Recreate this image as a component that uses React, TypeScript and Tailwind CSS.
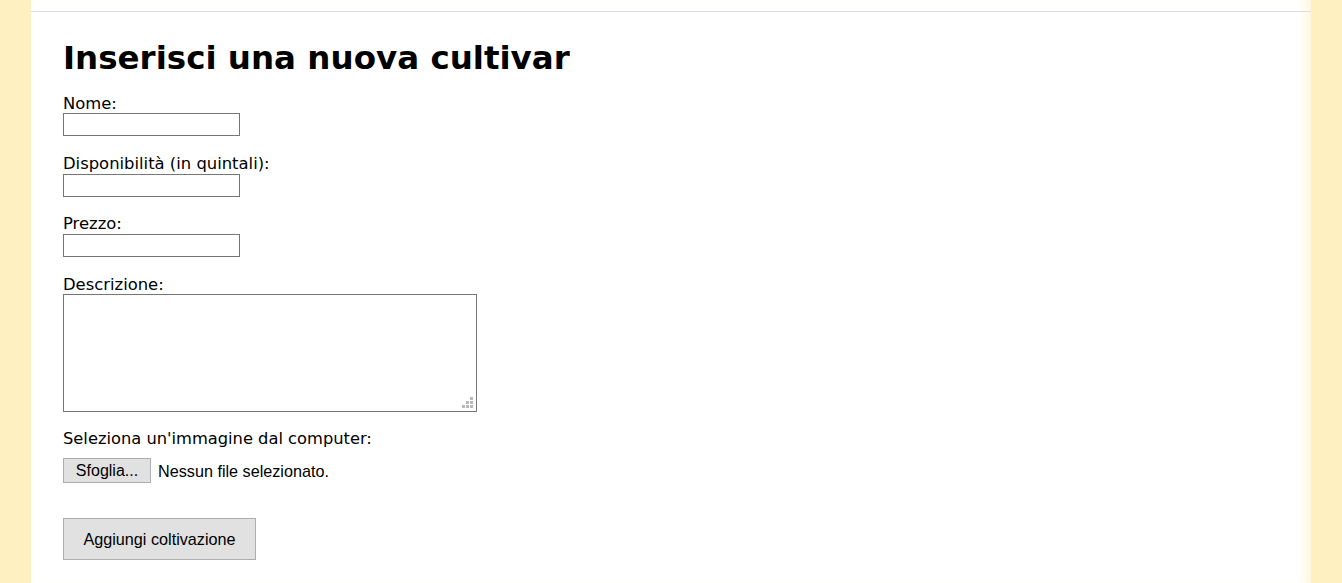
import { useState } from 'react'

const labelFont = { fontFamily: '"DejaVu Sans", Verdana, sans-serif' }

function Field({ label }: { label: string }) {
  return (
    <div className="mb-[18.7px]">
      <label className="block text-[16.4px] leading-[18.6px] text-black">{label}</label>
      <input
        type="text"
        className="block h-[23px] w-[177px] border border-[#767676] bg-white px-1 text-[13px] outline-none"
      />
    </div>
  )
}

export default function App() {
  const [desc, setDesc] = useState('')

  return (
    <div className="min-h-[583px] w-full bg-[#fef0c0]" style={labelFont}>
      <div className="mx-[31px] min-h-[583px] bg-white shadow-[inset_-14px_0_14px_-10px_rgba(254,240,192,0.7)]">
        {/* top rule */}
        <div className="h-[12px] border-b border-[#dddddd]" />

        <div className="pl-[32px] pt-[28px] pb-6">
          <h1 className="mb-[17.5px] text-[32.5px] font-bold leading-[37.25px] text-black">
            Inserisci una nuova cultivar
          </h1>

          <Field label="Nome:" />
          <Field label="Disponibilità (in quintali):" />
          <Field label="Prezzo:" />

          <div className="mb-[18px]">
            <label className="block text-[16.4px] leading-[18.6px] text-black">Descrizione:</label>
            <div className="relative h-[118px] w-[414px]">
              <textarea
                value={desc}
                onChange={(e) => setDesc(e.target.value)}
                className="block h-full w-full resize-none border border-[#767676] bg-white p-1 text-[13px] outline-none"
              />
              {/* resize grip */}
              <svg className="absolute bottom-[3px] right-[3px]" width="12" height="12" viewBox="0 0 12 12">
                <g fill="#b9b9b9">
                  <rect x="8" y="0" width="3" height="3" />
                  <rect x="4" y="4" width="3" height="3" />
                  <rect x="8" y="4" width="3" height="3" />
                  <rect x="0" y="8" width="3" height="3" />
                  <rect x="4" y="8" width="3" height="3" />
                  <rect x="8" y="8" width="3" height="3" />
                </g>
              </svg>
            </div>
          </div>

          <label className="block text-[16.3px] leading-[18.6px] text-black">
            Seleziona un'immagine dal computer:
          </label>
          <div
            className="mt-[9.5px] flex items-center gap-[7px]"
            style={{ fontFamily: '"Liberation Sans", Arial, sans-serif' }}
          >
            <button className="h-[25px] w-[88px] border border-[#adadad] bg-[#e1e1e1] text-[16px] text-black">
              Sfoglia...
            </button>
            <span className="text-[16.2px] text-black">Nessun file selezionato.</span>
          </div>

          <button
            className="mt-[35px] h-[42px] w-[193px] border border-[#adadad] bg-[#e1e1e1] text-[16.2px] text-black"
            style={{ fontFamily: '"Liberation Sans", Arial, sans-serif' }}
          >
            Aggiungi coltivazione
          </button>
        </div>
      </div>
    </div>
  )
}
